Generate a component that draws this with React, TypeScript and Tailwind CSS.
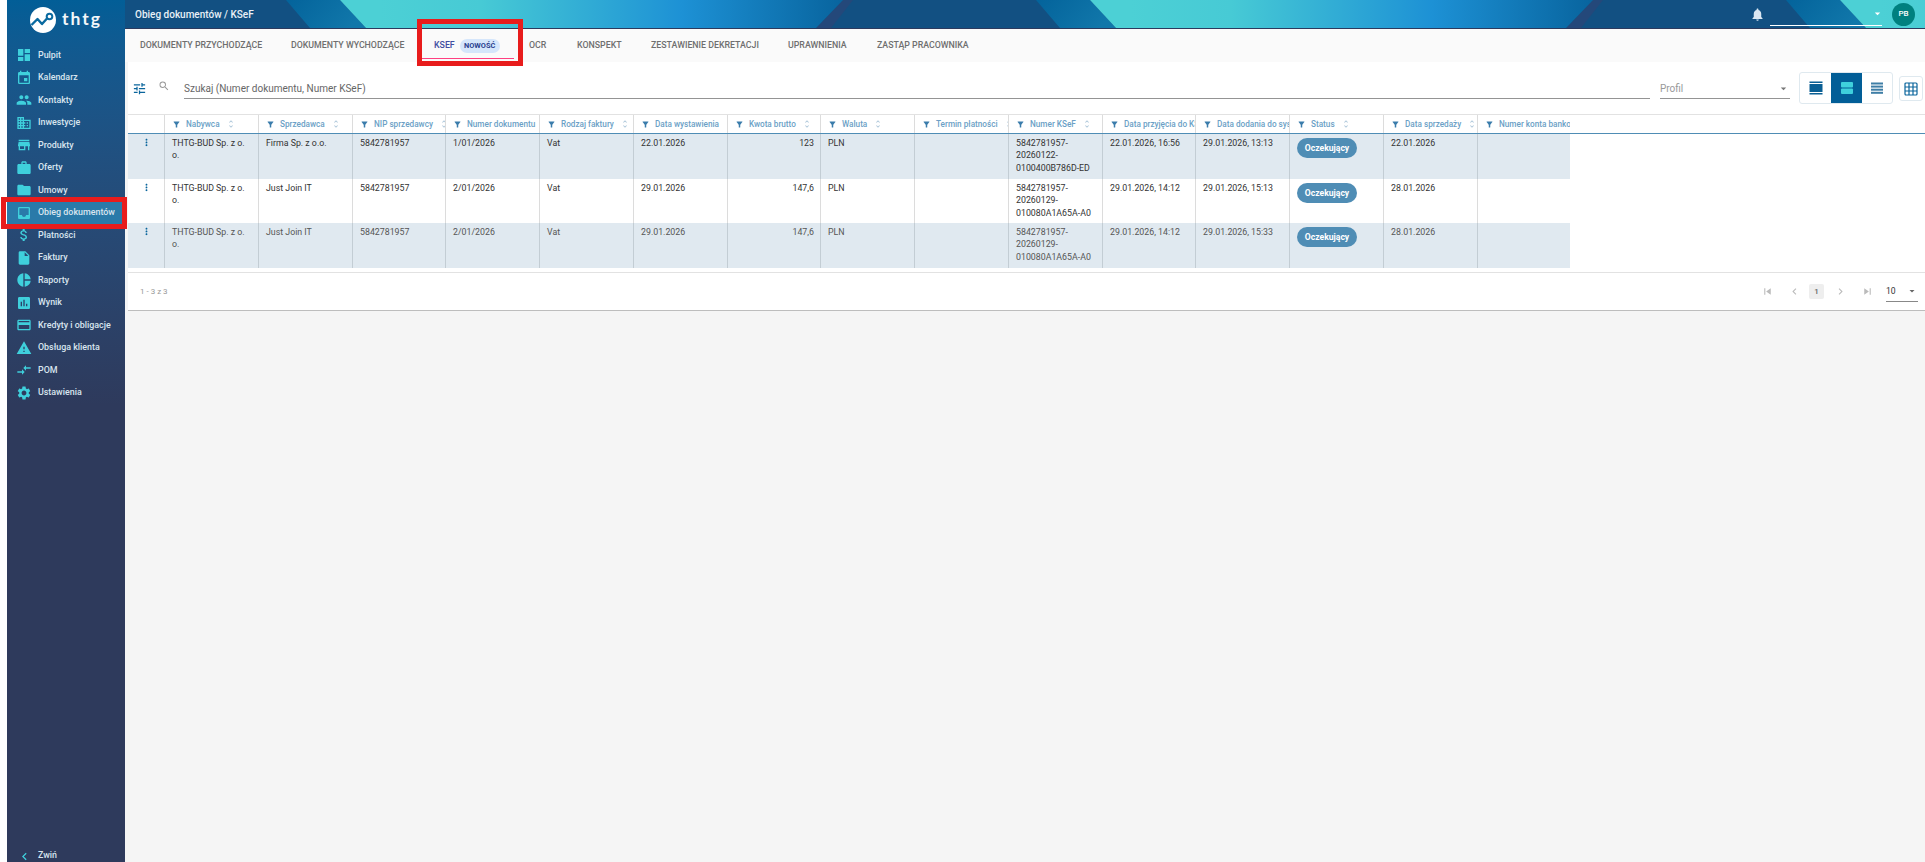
import React from "react";
import {
  MdDashboard, MdEvent, MdPeople, MdDomain, MdStore, MdWork, MdFolder, MdInbox, MdAttachMoney,
  MdInsertDriveFile, MdPieChart, MdAssessment, MdCreditCard, MdWarning, MdCompareArrows, MdSettings,
  MdChevronLeft, MdChevronRight, MdNotifications, MdArrowDropDown, MdTune, MdSearch, MdMoreVert,
  MdSkipPrevious, MdSkipNext, MdUnfoldMore, MdFilterAlt,
} from "react-icons/md";

const nav: [string, React.ComponentType<{ className?: string }>][] = [
  ["Pulpit", MdDashboard], ["Kalendarz", MdEvent], ["Kontakty", MdPeople], ["Inwestycje", MdDomain],
  ["Produkty", MdStore], ["Oferty", MdWork], ["Umowy", MdFolder], ["Obieg dokumentów", MdInbox],
  ["Płatności", MdAttachMoney], ["Faktury", MdInsertDriveFile], ["Raporty", MdPieChart], ["Wynik", MdAssessment],
  ["Kredyty i obligacje", MdCreditCard], ["Obsługa klienta", MdWarning], ["POM", MdCompareArrows], ["Ustawienia", MdSettings],
];

const cols: [string, string][] = [
  ["Nabywca", "w-[94px]"], ["Sprzedawca", "w-[94px]"], ["NIP sprzedawcy", "w-[93px]"], ["Numer dokumentu", "w-[94px]"],
  ["Rodzaj faktury", "w-[94px]"], ["Data wystawienia", "w-[94px]"], ["Kwota brutto", "w-[93px]"], ["Waluta", "w-[94px]"],
  ["Termin płatności", "w-[94px]"], ["Numer KSeF", "w-[94px]"], ["Data przyjęcia do KSeF", "w-[93px]"], ["Data dodania do systemu", "w-[94px]"],
  ["Status", "w-[94px]"], ["Data sprzedaży", "w-[94px]"], ["Numer konta bankowego", "w-[93px]"],
];

const rows = [
  { h: "h-[45px]", bg: "bg-[#e0e9f0]", b: "border-[#c3cdd4]", c: "text-[#333]", v: ["THTG-BUD Sp. z o. o.", "Firma Sp. z o.o.", "5842781957", "1/01/2026", "Vat", "22.01.2026", "123", "PLN", "", ["5842781957-", "20260122-", "0100400B786D-ED"], "22.01.2026, 16:56", "29.01.2026, 13:13", "", "22.01.2026", ""] },
  { h: "h-[44px]", bg: "bg-white", b: "border-[#dcdcdc]", c: "text-[#333]", v: ["THTG-BUD Sp. z o. o.", "Just Join IT", "5842781957", "2/01/2026", "Vat", "29.01.2026", "147,6", "PLN", "", ["5842781957-", "20260129-", "010080A1A65A-A0"], "29.01.2026, 14:12", "29.01.2026, 15:13", "", "28.01.2026", ""] },
  { h: "h-[45px]", bg: "bg-[#e0e9f0]", b: "border-[#c3cdd4]", c: "text-[#555]", v: ["THTG-BUD Sp. z o. o.", "Just Join IT", "5842781957", "2/01/2026", "Vat", "29.01.2026", "147,6", "PLN", "", ["5842781957-", "20260129-", "010080A1A65A-A0"], "29.01.2026, 14:12", "29.01.2026, 15:33", "", "28.01.2026", ""] },
];

function HeaderArt() {
  return (
    <svg className="absolute inset-0 h-full w-full" viewBox="125 0 1800 28" preserveAspectRatio="none">
      <defs>
        <linearGradient id="teal" x1="0" x2="1" y1="0" y2="0">
          <stop offset="0.08" stopColor="#4cd0d5" />
          <stop offset="0.28" stopColor="#47cad5" />
          <stop offset="0.68" stopColor="#1d91d5" />
          <stop offset="1" stopColor="#08649e" />
        </linearGradient>
        <linearGradient id="mid" x1="0" x2="1" y1="0" y2="0.3">
          <stop offset="0" stopColor="#03639b" />
          <stop offset="1" stopColor="#1177aa" />
        </linearGradient>
      </defs>
      {[0, 750, 1500].map((o) => (
        <g key={o} transform={`translate(${o} 0)`}>
          <polygon points="286,0 340,0 366,28 310,28" fill="url(#mid)" />
          <polygon points="843,0 853,0 831,28 816,28" fill="#24487a" />
          <polygon points="340,0 843,0 816,28 366,28" fill="url(#teal)" />
        </g>
      ))}
    </svg>
  );
}

function Logo() {
  return (
    <div className="flex h-[44px] items-start gap-[6px] pl-[23px] pt-[7px]">
      <svg viewBox="0 0 26 26" className="h-[26px] w-[26px] shrink-0">
        <circle cx="13" cy="13" r="13" fill="#fff" />
        <path d="M1.5 18 L7.5 12 L12 17 L17 11.5" fill="none" stroke="#0a6aa0" strokeWidth="2.4" strokeLinejoin="round" />
        <circle cx="19.5" cy="9.5" r="2.8" fill="#fff" stroke="#0a6aa0" strokeWidth="2" />
      </svg>
      <span className="font-['Lato',sans-serif] text-[17.5px] leading-[24px] font-bold tracking-[2px] text-[#f3f7fa]">thtg</span>
    </div>
  );
}

function ViewIcon({ kind, color }: { kind: number; color: string }) {
  if (kind === 0)
    return (
      <svg viewBox="0 0 14 14" className="h-[14px] w-[14px]" fill={color}>
        <rect x="0.5" y="0.5" width="13" height="1.5" />
        <rect x="0.5" y="3" width="13" height="8" />
        <rect x="0.5" y="12" width="13" height="1.5" />
      </svg>
    );
  if (kind === 1)
    return (
      <svg viewBox="0 0 14 14" className="h-[14px] w-[14px]" fill={color}>
        <rect x="1" y="1" width="12" height="5.4" rx="1" />
        <rect x="1" y="7.6" width="12" height="5.4" rx="1" />
      </svg>
    );
  return (
    <svg viewBox="0 0 14 14" className="h-[14px] w-[14px]" fill={color}>
      <rect x="1" y="1.5" width="12" height="2" />
      <rect x="1" y="4.6" width="12" height="2" />
      <rect x="1" y="7.7" width="12" height="2" />
      <rect x="1" y="10.8" width="12" height="2" />
    </svg>
  );
}

export default function App() {
  return (
    <div className="flex h-[862px] w-[1925px] overflow-hidden bg-white font-['Roboto',sans-serif]">
      <div className="w-[7px] shrink-0 bg-white" />
      <aside className="flex h-full w-[118px] shrink-0 flex-col bg-gradient-to-b from-[#025e97] from-0% to-[#2e3a5c] to-[47%]">
        <Logo />
        <nav className="flex flex-col">
          {nav.map(([label, Icon]) => {
            const active = label === "Obieg dokumentów";
            return (
              <div key={label} className={`relative flex h-[22.5px] items-center ${active ? "bg-[#2a7aa9]" : ""}`}>
                <span className="flex w-[25px] shrink-0 justify-end">
                  <Icon className="h-[16px] w-[16px] text-[#3fd0dc]" />
                </span>
                <span className="pl-[6px] text-[8.9px] font-medium whitespace-nowrap text-[#d9e5ef]">{label}</span>
                {active && <span className="pointer-events-none absolute top-[-5px] right-[-2px] bottom-[-5px] left-[-6px] border-[5px] border-[#e81c1c]" />}
              </div>
            );
          })}
        </nav>
        <div className="mt-auto flex h-[11px] items-center pb-[1px]">
          <span className="flex w-[25px] shrink-0 justify-end">
            <MdChevronLeft className="h-[15px] w-[15px] text-[#3fd0dc]" />
          </span>
          <span className="pl-[6px] text-[8.9px] font-medium text-[#d9e5ef]">Zwiń</span>
        </div>
      </aside>

      <div className="flex min-w-0 flex-1 flex-col bg-[#f5f5f5]">
        <header className="relative h-[29px] shrink-0 border-b border-[#2c3a5e] bg-[#125082]">
          <HeaderArt />
          <div className="relative flex h-[28px] items-center pl-[10px]">
            <span className="text-[10px] font-medium text-[#e9f1f7]">Obieg dokumentów / KSeF</span>
            <div className="ml-auto flex h-full items-center">
              <MdNotifications className="h-[15px] w-[15px] text-[#dbe7f2]" />
              <div className="ml-[5px] flex h-[23.5px] w-[112px] items-center justify-end border-b border-white">
                <MdArrowDropDown className="mr-[-2px] h-[13px] w-[13px] text-white" />
              </div>
              <div className="mr-[10px] ml-[10px] flex h-[23px] w-[23px] items-center justify-center rounded-full bg-[#00807f] text-[8px] font-medium text-white">PB</div>
            </div>
          </div>
        </header>

        <div className="flex h-[33px] shrink-0 items-center bg-[#fafafa] pl-[15px] text-[8.8px] font-medium whitespace-nowrap text-[#6f6f6f]">
          <span className="w-[151px]">DOKUMENTY PRZYCHODZĄCE</span>
          <span className="w-[143px]">DOKUMENTY WYCHODZĄCE</span>
          <div className="relative flex h-full w-[95px] items-center text-[#3f4fa0]">
            <span>KSEF</span>
            <span className="ml-[5px] flex h-[14px] w-[40px] items-center justify-center rounded-full bg-[#d5e6fb] text-[7.4px] font-bold text-[#2a3f8f]">NOWOŚĆ</span>
            <span className="absolute top-[29px] right-[15px] left-[-12px] h-px bg-[#ff4081]" />
            <span className="pointer-events-none absolute top-[-10px] right-[6px] bottom-[-4px] left-[-17px] border-[5px] border-[#e81c1c]" />
          </div>
          <span className="w-[48px]">OCR</span>
          <span className="w-[74px]">KONSPEKT</span>
          <span className="w-[137px]">ZESTAWIENIE DEKRETACJI</span>
          <span className="w-[89px]">UPRAWNIENIA</span>
          <span>ZASTĄP PRACOWNIKA</span>
        </div>

        <main className="ml-[3px] flex h-[249px] shrink-0 flex-col border-b border-[#bdbdbd] bg-white">
          <div className="flex h-[52px] shrink-0 items-start pt-[10px]">
            <MdTune className="mt-[9px] ml-[4px] h-[15px] w-[15px] text-[#0a659c]" />
            <MdSearch className="mt-[8px] ml-[11px] h-[12px] w-[12px] text-[#999]" />
            <div className="ml-[14px] flex h-[27px] w-[1466px] items-center border-b border-[#949494] pt-[6px] text-[10px] text-[#666]">
              Szukaj (Numer dokumentu, Numer KSeF)
            </div>
            <div className="ml-[10px] flex h-[27px] w-[130px] items-center justify-between border-b border-[#949494] pt-[6px] text-[10px] text-[#999]">
              Profil
              <MdArrowDropDown className="h-[13px] w-[13px] text-[#777]" />
            </div>
            <div className="ml-[9px] flex h-[32px] w-[94px] overflow-hidden rounded-[3px] border border-[#dfe9ef]">
              <span className="flex w-[31px] items-center justify-center"><ViewIcon kind={0} color="#0a5f94" /></span>
              <span className="flex w-[31px] items-center justify-center bg-[#025e97]"><ViewIcon kind={1} color="#3fd0dc" /></span>
              <span className="flex w-[30px] items-center justify-center"><ViewIcon kind={2} color="#3f7ea6" /></span>
            </div>
            <div className="mt-[4px] ml-[6px] flex h-[25px] w-[24px] items-center justify-center rounded-[3px] border border-[#dfe9ef]">
              <svg viewBox="0 0 14 14" className="h-[14px] w-[14px]" fill="none" stroke="#0a659c" strokeWidth="1.2">
                <rect x="1" y="1" width="12" height="12" rx="1" />
                <path d="M5 1v12M9 1v12M1 5h12M1 9h12" />
              </svg>
            </div>
          </div>

          <div className="flex h-[20px] shrink-0 border-t border-b border-t-[#e2e2e2] border-b-[#4f8db5]">
            <div className="w-[36px] shrink-0" />
            {cols.map(([label, w]) => (
              <div key={label} className={`flex ${w} shrink-0 items-center overflow-hidden border-l border-[#dcdcdc] pl-[7px] whitespace-nowrap`}>
                <MdFilterAlt className="h-[9px] w-[9px] shrink-0 text-[#3a7cab]" />
                <span className="ml-[5px] text-[8.2px] font-medium text-[#6b9fc6]">{label}</span>
                <MdUnfoldMore className="ml-[6px] h-[10px] w-[10px] shrink-0 text-[#a9c4d8]" />
              </div>
            ))}
          </div>

          {rows.map((r, i) => (
            <div key={i} className="flex">
              <div className={`flex ${r.h} w-[1442px] shrink-0 ${r.bg}`}>
                <div className="flex w-[36px] shrink-0 justify-center pt-[3px]">
                  <MdMoreVert className="h-[11px] w-[11px] text-[#0a659c]" />
                </div>
                {r.v.map((t, j) => (
                  <div
                    key={j}
                    className={`${cols[j][1]} shrink-0 border-l ${r.b} pt-[3px] pl-[7px] text-[8.8px] leading-[12.3px] ${r.c} ${j === 6 ? "pr-[6px] text-right" : "pr-[4px]"}`}
                  >
                    {j === 12 ? (
                      <span className="mt-[1px] flex h-[20px] w-[60px] items-center justify-center rounded-full bg-[#4f8db5] text-[8.6px] font-bold text-white">Oczekujący</span>
                    ) : Array.isArray(t) ? (
                      t.map((p) => <div key={p} className="whitespace-nowrap">{p}</div>)
                    ) : (
                      t
                    )}
                  </div>
                ))}
              </div>
            </div>
          ))}

          <div className="mt-[4px] flex flex-1 items-center border-t border-[#e2e2e2] pr-[7px] pl-[12px] text-[8px] text-[#999]">
            <span>1 - 3 z 3</span>
            <div className="ml-auto flex items-center text-[#bbb]">
              <MdSkipPrevious className="h-[13px] w-[13px]" />
              <MdChevronLeft className="ml-[14px] h-[13px] w-[13px]" />
              <span className="ml-[8px] flex h-[15px] w-[15px] items-center justify-center rounded-[2px] bg-[#eee] text-[8px] font-medium text-[#666]">1</span>
              <MdChevronRight className="ml-[10px] h-[13px] w-[13px]" />
              <MdSkipNext className="ml-[14px] h-[13px] w-[13px]" />
              <div className="ml-[12px] flex h-[20px] w-[32px] items-center justify-between border-b border-[#888] text-[8.6px] text-[#333]">
                10
                <MdArrowDropDown className="h-[12px] w-[12px] text-[#666]" />
              </div>
            </div>
          </div>
        </main>
      </div>
    </div>
  );
}
